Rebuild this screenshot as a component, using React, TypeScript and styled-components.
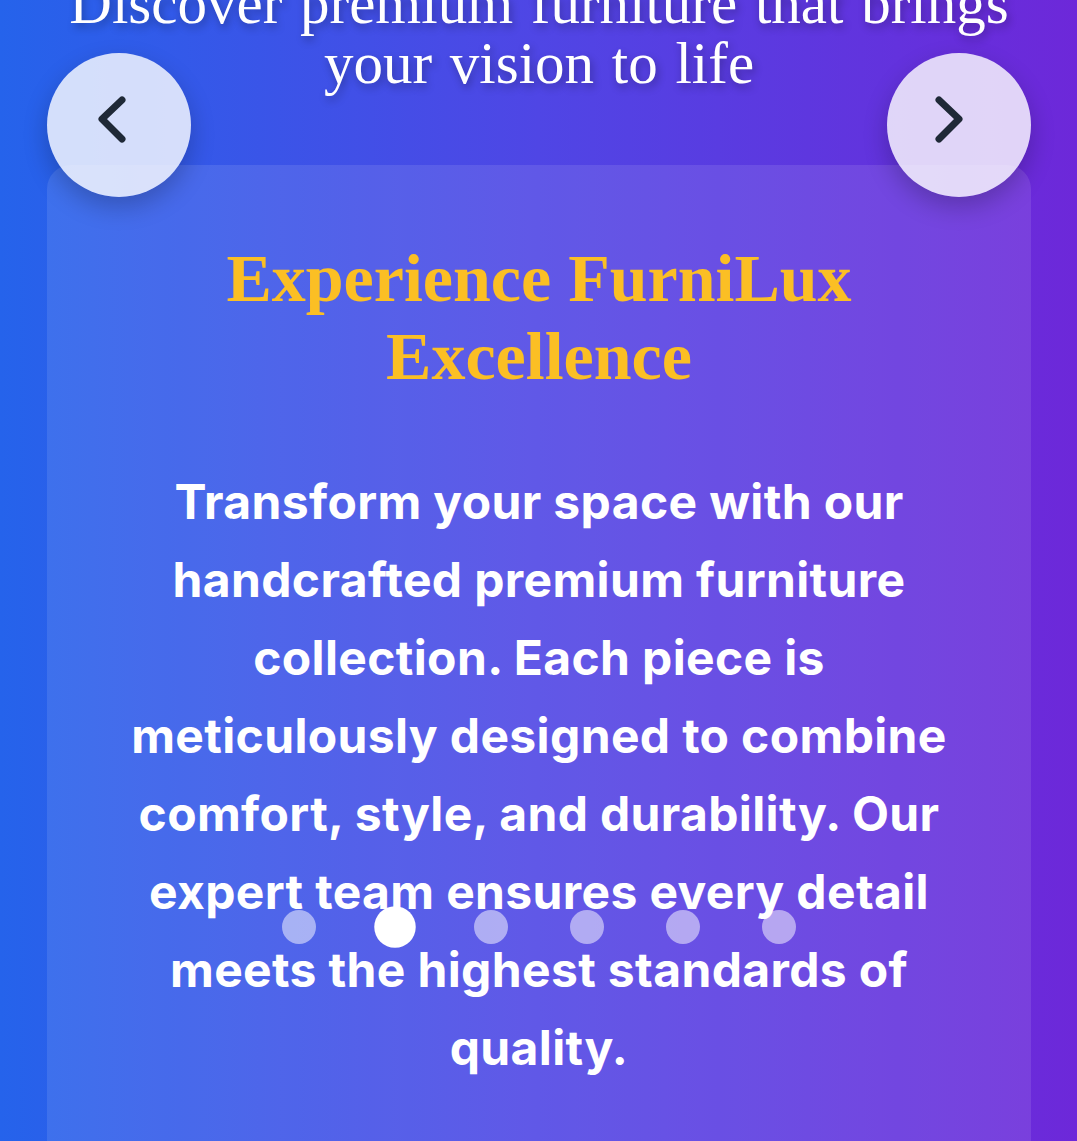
import React from "react";
import styled, { createGlobalStyle } from "styled-components";

const GlobalStyle = createGlobalStyle`
  html, body {
    margin: 0;
    padding: 0;
    background: #2563eb;
  }
  body {
    overflow: hidden;
    font-family: Inter, "Noto Sans", sans-serif;
  }
`;

const Page = styled.main`
  min-height: 100vh;
  box-sizing: border-box;
  padding: 0 46px 0 47px;
  background: linear-gradient(to right, #2563eb 0%, #4f46e5 50%, #6d28d9 100%);
  display: flex;
  flex-direction: column;
  align-items: stretch;
  overflow: hidden;
`;

const Heading = styled.h2`
  margin: -27px auto 72px;
  max-width: 1000px;
  font-family: "Liberation Serif", "Times New Roman", serif;
  font-weight: 400;
  font-size: 59px;
  line-height: 60px;
  word-spacing: 3px;
  color: #ffffff;
  text-align: center;
  text-shadow: 2px 4px 8px rgba(0, 0, 0, 0.3);
`;

const Carousel = styled.section`
  position: relative;
`;

const NavButton = styled.button<{ $side: "left" | "right" }>`
  position: absolute;
  top: -112px;
  ${(p) => (p.$side === "left" ? "left: 0;" : "right: 0;")}
  width: 144px;
  height: 144px;
  padding: 0;
  border: none;
  border-radius: 50%;
  background: rgba(255, 255, 255, 0.8);
  box-shadow: 0 10px 25px rgba(0, 0, 0, 0.22);
  cursor: pointer;
  z-index: 2;
  display: block;

  svg {
    display: block;
  }
`;

const Card = styled.article`
  box-sizing: border-box;
  border-radius: 24px;
  background: rgba(255, 255, 255, 0.1);
  padding: 74px 64px 120px;
  display: flex;
  flex-direction: column;
  align-items: center;
  text-align: center;
`;

const Title = styled.h3`
  margin: 0 0 68px;
  font-family: "Liberation Serif", "Times New Roman", serif;
  font-weight: 700;
  font-size: 68px;
  line-height: 78px;
  color: #fbbf24;
  max-width: 700px;
`;

const Text = styled.p`
  margin: 0;
  font-family: Inter, "Noto Sans", sans-serif;
  font-weight: 700;
  font-size: 48px;
  line-height: 78px;
  letter-spacing: 0.35px;
  color: #ffffff;
`;

const Dots = styled.div`
  position: absolute;
  top: 745px;
  left: 0;
  right: 0;
  display: flex;
  justify-content: center;
  align-items: center;
  gap: 62px;
`;

const Dot = styled.span<{ $active?: boolean }>`
  width: 34px;
  height: 34px;
  border-radius: 50%;
  background: ${(p) => (p.$active ? "#ffffff" : "rgba(255, 255, 255, 0.5)")};
  transform: scale(${(p) => (p.$active ? 1.22 : 1)});
`;

const Chevron: React.FC<{ dir: "left" | "right" }> = ({ dir }) => (
  <svg width="144" height="144" viewBox="0 0 144 144" fill="none">
    <polyline
      points={dir === "left" ? "75,47 55,66 75,86" : "52,47 72,66 52,86"}
      stroke="#1f2937"
      strokeWidth="7"
      strokeLinecap="round"
      strokeLinejoin="round"
    />
  </svg>
);

export default function App() {
  const slides = [0, 1, 2, 3, 4, 5];
  const active = 1;
  return (
    <>
      <GlobalStyle />
      <Page>
        <Heading>Discover premium furniture that brings your vision to life</Heading>
        <Carousel>
          <NavButton $side="left" aria-label="Previous">
            <Chevron dir="left" />
          </NavButton>
          <NavButton $side="right" aria-label="Next">
            <Chevron dir="right" />
          </NavButton>
          <Card>
            <Title>Experience FurniLux Excellence</Title>
            <Text>
              Transform your space with our handcrafted premium furniture collection. Each piece is
              meticulously designed to combine comfort, style, and durability. Our expert team ensures
              every detail meets the highest standards of quality.
            </Text>
          </Card>
          <Dots>
            {slides.map((s) => (
              <Dot key={s} $active={s === active} />
            ))}
          </Dots>
        </Carousel>
      </Page>
    </>
  );
}
